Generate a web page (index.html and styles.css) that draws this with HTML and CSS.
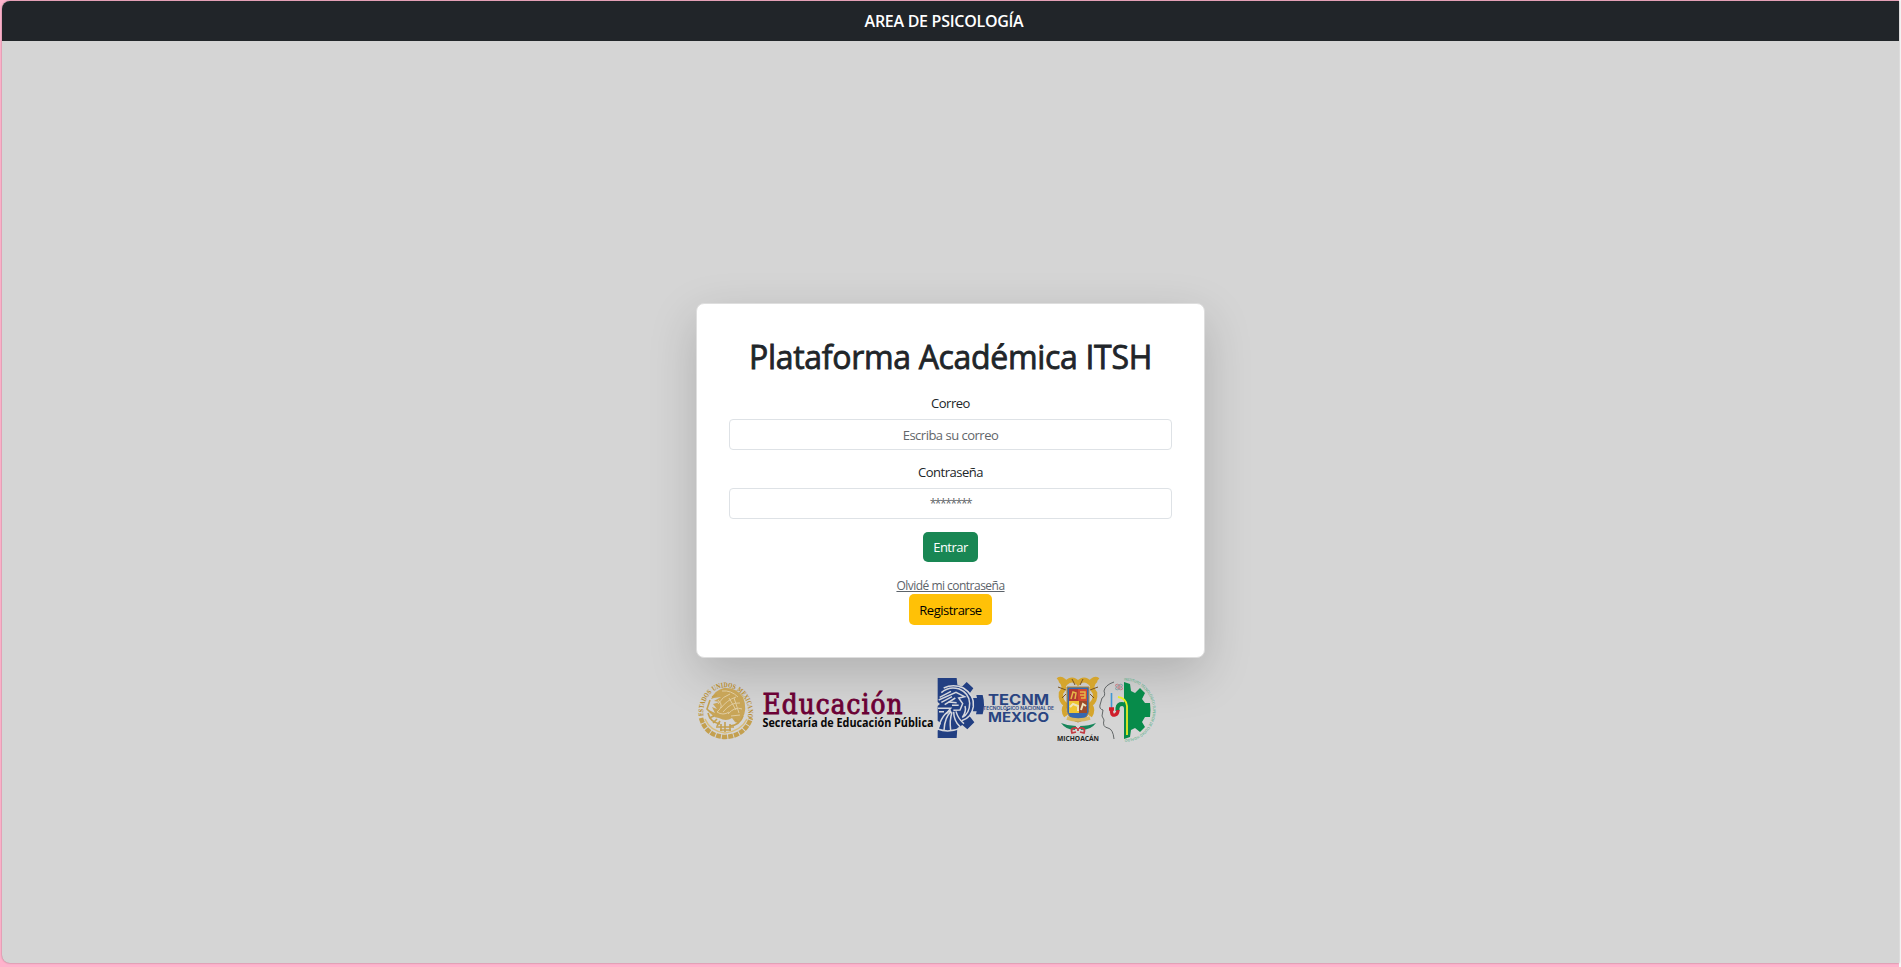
FILE: index.html
```html
<!DOCTYPE html>
<html lang="es">
<head>
<meta charset="utf-8">
<title>Plataforma Académica ITSH</title>
<link rel="stylesheet" href="styles.css">
</head>
<body>
<div class="window">
  <header class="topbar">AREA DE PSICOLOGÍA</header>
  <main class="content">
    <form class="card">
      <h1 class="title">Plataforma Académica ITSH</h1>
      <label class="label label-email" for="email">Correo</label>
      <input class="field" id="email" type="email" placeholder="Escriba su correo">
      <label class="label label-pass" for="pass">Contraseña</label>
      <input class="field field-pass" id="pass" type="password" placeholder="********">
      <button class="btn btn-enter" type="button">Entrar</button>
      <a class="forgot" href="#">Olvidé mi contraseña</a>
      <button class="btn btn-register" type="button">Registrarse</button>
    </form>
    <div class="logos">
      <svg width="238" height="66" viewBox="0 0 238 66">
        <defs><path id="sealArc" d="M6.500 40A22.500 25 0 1 1 51 40"/></defs>
        <g fill="none" stroke="#c4a04f">
          <path d="M4 42Q9 60 28 61Q48 60 54 42" stroke-width="4.500" stroke-dasharray="5 1"/>
          <path d="M8 43Q13 55 28 57Q44 55 50 43" stroke="#d9bd7a" stroke-width="1.500"/>
        </g>
        <text class="serif" font-size="6.500" font-weight="bold" fill="#b98f35"><textPath href="#sealArc" textLength="87" lengthAdjust="spacingAndGlyphs">ESTADOS UNIDOS MEXICANOS</textPath></text>
        <path d="M14 23Q18 14 27 12Q39 11 46 21Q51 34 45 43Q42 48 38 46L35 42Q29 46 22 42Q14 41 12 34L18 37L15 31L20 33L16 28L23 26L17 25L24 21L17 22Z" fill="#c8a558"/>
        <g fill="none" stroke="#e0cca0" stroke-width="1">
          <path d="M21 28Q26 20 33 18M24 32Q30 24 39 21M26 36Q34 26 43 27M31 38Q38 30 45 33M34 40L43 39M21 24Q28 30 20 36Q26 40 32 36"/>
          <path d="M25 15Q34 14 41 21M37 22L42 37M32 22L39 34"/>
        </g>
        <g fill="none" stroke="#c4a04f" stroke-width="1.600">
          <path d="M11 37Q13 46 23 48M12 42L17 40M16 47L20 43M20 50L23 45"/>
          <path d="M46 40Q43 49 33 50M42 47L38 43"/>
          <path d="M19 51H37M23 54H34M24 48V55M28 46V56M33 48V55"/>
          <path d="M13 24L10 33L14 37M15 21L20 19"/>
        </g>
        <text class="serif" x="65.500" y="37.500" font-size="27.500" fill="#6b0035" stroke="#6b0035" stroke-width=".9" textLength="140" lengthAdjust="spacing">Educación</text>
        <text class="sans" x="65.500" y="51" font-size="12" font-weight="bold" fill="#080808" textLength="171" lengthAdjust="spacingAndGlyphs">Secretaría de Educación Pública</text>
      </svg>
      <svg width="120" height="66" viewBox="0 0 120 66">
        <g transform="translate(-3 -2) scale(.33333)">
          <path fill="#223f82" d="M17 12H74L76 32L90 38L104 24L124 43L112 59L119 72L135 72L133 63H152Q160 92 152 121H132L134 112L120 112L113 127L127 145L106 166L91 153L76 162L74 192H17V170L27 148L17 140V96L24 90L17 84Z"/>
          <g fill="none" stroke="#d5d7dd" stroke-width="4.500">
            <path d="M35 42Q64 29 94 42Q128 63 124 98Q119 132 89 140"/>
            <path d="M28 56Q51 35 82 45Q112 58 113 88Q113 119 91 130Q104 112 99 96"/>
            <path d="M20 78L72 55L98 68L80 72L92 89L84 108L64 109"/>
            <path d="M23 70L57 52M28 85L60 68M38 92L70 72M18 103H56L43 119M21 113H36"/>
            <path d="M57 110Q30 117 18 166M58 112Q38 128 36 169M60 115Q52 138 56 169M65 113Q65 140 84 158M72 112Q78 134 96 149"/>
            <path d="M17 165Q50 178 91 161M50 84L74 86M60 94L80 94"/>
          </g>
        </g>
        <g fill="#294481">
          <text class="wide" x="53" y="29" font-size="14" font-weight="bold" textLength="61" lengthAdjust="spacingAndGlyphs">TECNM</text>
          <text class="wide" x="48" y="33.800" font-size="4.200" font-weight="600" textLength="71" lengthAdjust="spacingAndGlyphs">TECNOLÓGICO NACIONAL DE</text>
          <text class="wide" x="53" y="46" font-size="12.500" font-weight="bold" textLength="61" lengthAdjust="spacingAndGlyphs">MÉXICO</text>
        </g>
      </svg>
      <svg width="45" height="66" viewBox="0 0 45 66">
        <g fill="none" stroke="#d5a52d" stroke-width="4.500">
          <path d="M3 4Q7 1 11 7Q17 1 23 7Q29 1 35 7Q39 1 43 4"/>
          <path d="M5 4Q12 10 6 17Q5 25 11 29Q7 34 11 40M41 4Q34 10 40 17Q41 25 35 29Q39 34 35 40"/>
        </g>
        <path d="M3 11L11 14M43 11L35 14M17 3L20 9M28 3L25 9M7 22L11 18M39 22L35 18" stroke="#765323" stroke-width="1"/>
        <path d="M12 11H34V36Q31 44 23 46Q15 44 12 36Z" fill="#3568b0" stroke="#b58a35"/>
        <path d="M14 13H23V25H14Z" fill="#b63a31"/><path d="M23 13H32V25H23Z" fill="#d14a31"/>
        <path d="M14 25H24V37H14Z" fill="#efc633"/><path d="M24 25H32V37H24Z" fill="#9b4b2b"/>
        <path d="M16 23L18 16L21 17L20 23M25 16H30V22H26M25 19H30" fill="none" stroke="#e4b748" stroke-width="1.500"/>
        <path d="M15 31L18 28L23 30V35M26 34L28 28L31 30" fill="none" stroke="#eee5be" stroke-width="2"/>
        <path d="M12 42Q23 46 35 42" fill="none" stroke="#d8b861" stroke-width="3.500"/>
        <path d="M6 47Q13 50 21 50L20 54Q11 54 6 47ZM41 47Q34 50 25 50L26 54Q36 54 41 47Z" fill="#16865b"/>
        <path d="M22 52Q15 51 17 57L21 56M24 52Q31 51 29 57L25 56M23 52V55" fill="none" stroke="#c43a42" stroke-width="1.800"/>
        <text class="sans" x="2" y="65" font-size="6.600" font-weight="bold" fill="#222" textLength="42" lengthAdjust="spacingAndGlyphs">MICHOACÁN</text>
      </svg>
      <svg width="58" height="66" viewBox="0 0 58 66">
        <defs><path id="gearArc" d="M24 4.500A29 29.500 0 0 1 24 63.500"/></defs>
        <path d="M14 6Q5 9 4 15Q6 20 2 22L0 29Q-1 33 3 34L2 40L4 44Q2 51 8 52Q13 53 14 63" fill="none" stroke="#454a4b" stroke-width=".800"/>
        <path fill="#078b4a" d="M24 6L30 8L31 15L35 17L40 12L45 17L42 23L45 27L50 27Q51 34 50 41L45 41L42 46L45 51L40 56L35 52L31 54L30 61L24 63Z"/>
        <path d="M17.500 35V32Q18 28 22 28Q26 28 26 33V40" fill="none" stroke="#078b4a" stroke-width="4"/>
        <path d="M18 21Q26 22 27 30V59" fill="none" stroke="#eaee22" stroke-width="1.800"/>
        <path d="M11.500 17V34" stroke="#4098d3" stroke-width="1.600"/>
        <path d="M9 33H14M11.500 32V36Q12 40 15 39Q18 38 18 34" fill="none" stroke="#cf1e2b" stroke-width="3.300"/>
        <g fill="none" stroke="#c66870" stroke-width=".700"><ellipse cx="19" cy="11" rx="4" ry="1.800" transform="rotate(35 19 11)"/><ellipse cx="19" cy="11" rx="4" ry="1.800" transform="rotate(-35 19 11)" stroke="#6c9a9f"/><circle cx="19" cy="11" r="1"/></g>
        <text class="sans" font-size="3.600" fill="#35a873"><textPath href="#gearArc" textLength="91" lengthAdjust="spacingAndGlyphs">INSTITUTO TECNOLÓGICO SUPERIOR DE CIUDAD HIDALGO</textPath></text>
      </svg>
    </div>
  </main>
</div>
</body>
</html>
```
FILE: styles.css
```css
* { box-sizing: border-box; }
html, body { height: 100%; }
body {
  margin: 0;
  padding: 1px 2px 4px;
  background: linear-gradient(to right, #ffb3cc 1899px, #f7f7f7 1899px);
  overflow: hidden;
  font-family: "Open Sans", "Noto Sans", sans-serif;
  color: #212529;
}
.window {
  height: 962px;
  display: flex;
  flex-direction: column;
  border-radius: 8px 0 0 8px;
  overflow: hidden;
  background: #d5d5d5;
  box-shadow: 0 0 2px rgba(0, 0, 0, .4);
}
.topbar {
  height: 40px;
  flex: none;
  padding-right: 13px;
  background: #212529;
  color: #fff;
  text-align: center;
  font-size: 16px;
  font-weight: 600;
  line-height: 41px;
  letter-spacing: -.28px;
}
.content {
  flex: 1;
  display: flex;
  flex-direction: column;
  align-items: center;
  padding-top: 262px;
}
.card {
  width: 509px;
  height: 355px;
  padding: 32px;
  display: flex;
  flex-direction: column;
  align-items: center;
  background: #fff;
  border: 1px solid #dedede;
  border-radius: 8px;
  box-shadow: 0 16px 48px rgba(0, 0, 0, .176);
}
.title {
  margin: 0;
  font-size: 32px;
  font-weight: 500;
  line-height: 42px;
  letter-spacing: -.32px;
  white-space: nowrap;
  -webkit-text-stroke: .8px #212529;
}
.label { font-size: 13px; line-height: 20px; letter-spacing: -.48px; }
.label-email { margin: 15px 0 6px; }
.label-pass { margin: 12px 0 6px; }
.field {
  width: 443px;
  height: 31px;
  padding: 0;
  border: 1px solid #dee2e6;
  border-radius: 4px;
  font: 13px "Open Sans", "Noto Sans", sans-serif;
  letter-spacing: -.5px;
  text-align: center;
}
.field::placeholder { color: #62666a; opacity: 1; }
.field-pass { font-size: 12px; letter-spacing: -1.4px; }
.btn {
  padding: 0;
  border: 0;
  border-radius: 5px;
  font: 13px "Open Sans", "Noto Sans", sans-serif;
  letter-spacing: -.5px;
}
.btn-enter { width: 55px; height: 30px; margin-top: 13px; background: #198754; color: #fff; }
.forgot {
  margin-top: 15px;
  font-size: 12px;
  line-height: 17px;
  letter-spacing: -.52px;
  color: #5c636a;
}
.btn-register { width: 83px; height: 31px; background: #ffc107; color: #000; }
.logos { width: 508px; margin-top: 18px; display: flex; }
.logos svg { flex: none; display: block; overflow: visible; }
.serif { font-family: "DejaVu Serif Condensed", "DejaVu Serif", serif; }
.sans { font-family: "Open Sans", sans-serif; }
.wide { font-family: Inter, sans-serif; }
```
